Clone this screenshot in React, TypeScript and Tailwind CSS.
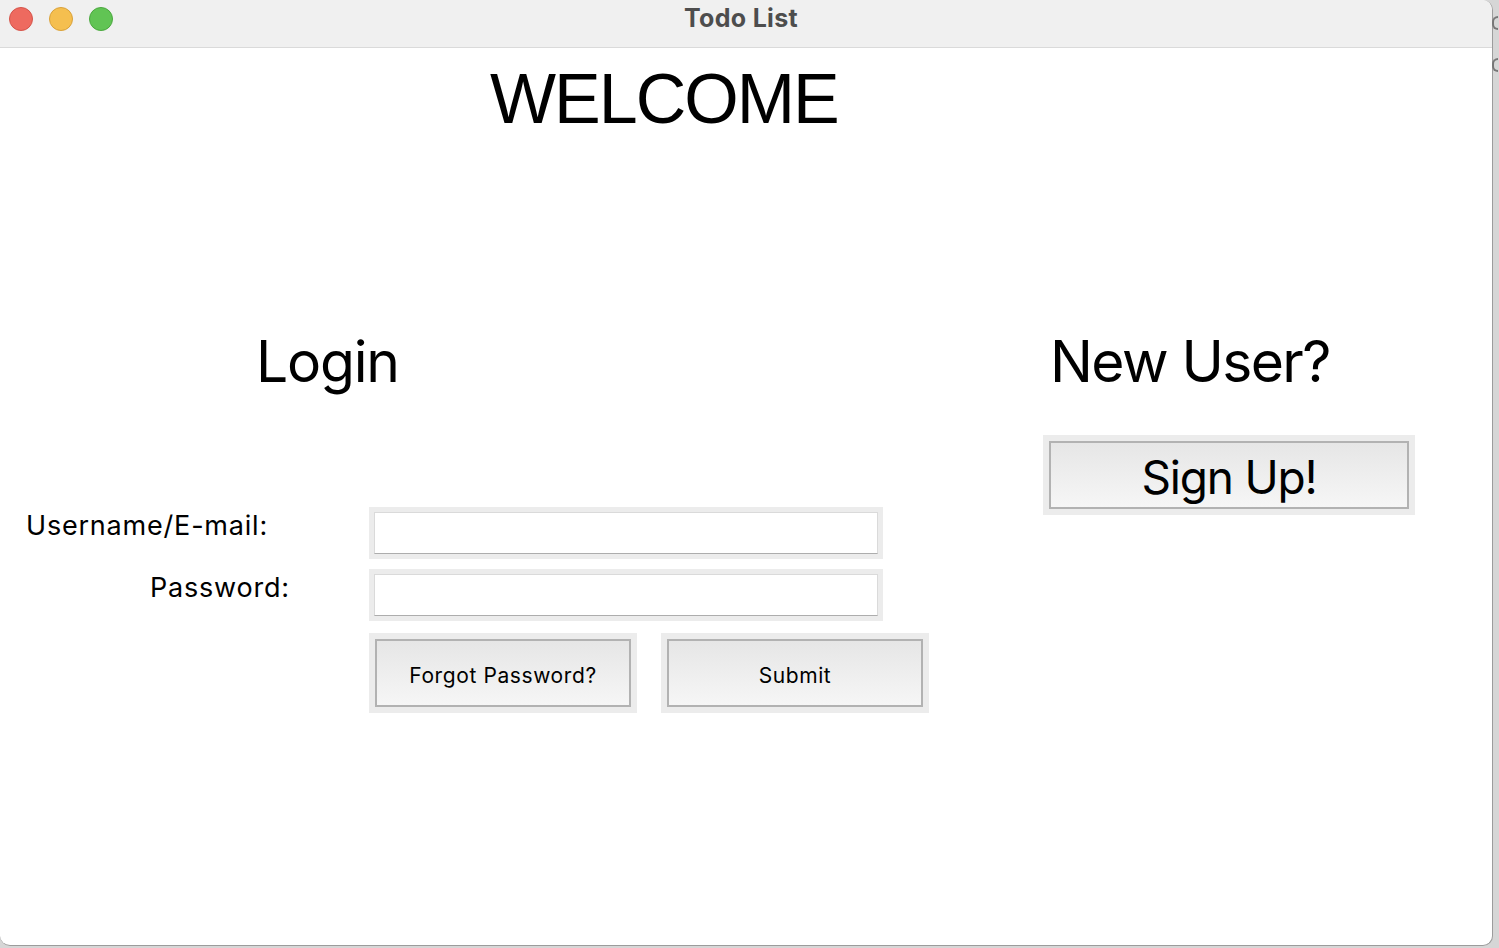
import React from "react";

const Frame = ({ children }: { children: React.ReactNode }) => (
    <div className="bg-[#ececec] p-[6px]">{children}</div>
);

const Entry = () => (
    <div className="bg-[#ececec] p-[5px]">
        <div className="h-[42px] w-[504px] bg-white border border-[#dadada] border-b-[#adadad]" />
    </div>
);

const App = () => {
    return (
        <div className="flex h-[948px] w-[1499px] bg-[#d6d6d6] font-['Inter',sans-serif] text-black overflow-hidden">
            <div className="flex flex-col w-[1493px] h-[946px] bg-white rounded-tr-[10px] rounded-b-[10px] border-r border-b border-[#9c9c9c] overflow-hidden">
                {/* Title bar */}
                <div className="grid grid-cols-[1fr_auto_1fr] items-start h-[48px] bg-[#f0f0f0] border-b border-[#dadada]">
                    <div className="flex gap-[16px] pl-[9px] pt-[7px]">
                        <span className="w-[24px] h-[24px] rounded-full bg-[#ee6a5f] border border-[#d5544a]" />
                        <span className="w-[24px] h-[24px] rounded-full bg-[#f5bf4f] border border-[#d9a13a]" />
                        <span className="w-[24px] h-[24px] rounded-full bg-[#61c454] border border-[#4ba83f]" />
                    </div>
                    <div className="pt-[6px] text-[25px] font-bold text-[#4d4d4d] leading-none tracking-[0.3px] -translate-x-[5px]">Todo List</div>
                    <div />
                </div>

                {/* Welcome */}
                <div className="pl-[490px] pt-[16px]">
                    <h1 className="font-['Liberation_Sans',sans-serif] text-[70px] leading-none tracking-[-2px]">WELCOME</h1>
                </div>

                <div className="flex mt-[199px]">
                    {/* Login column */}
                    <div className="flex flex-col w-[1043px]">
                        <h2 className="pl-[256px] text-[57px] leading-none tracking-[-1.2px]">Login</h2>
                        <div className="flex flex-col mt-[117px]">
                            <div className="flex">
                                <div className="w-[369px] pl-[26px] pt-[5px] text-[27px] leading-none tracking-[0.8px]">Username/E-mail:</div>
                                <Entry />
                            </div>
                            <div className="flex mt-[10px]">
                                <div className="w-[369px] pl-[150px] pt-[5px] text-[27px] leading-none tracking-[0.8px]">Password:</div>
                                <Entry />
                            </div>
                            <div className="flex mt-[12px] pl-[369px] gap-[24px]">
                                <Frame>
                                    <button className="flex items-center justify-center w-[256px] h-[68px] pt-[5px] border-2 border-[#b2b2b2] bg-linear-to-b from-[#e6e6e6] to-[#f6f6f6] text-[21px] tracking-[0.6px]">
                                        Forgot Password?
                                    </button>
                                </Frame>
                                <Frame>
                                    <button className="flex items-center justify-center w-[256px] h-[68px] pt-[5px] border-2 border-[#b2b2b2] bg-linear-to-b from-[#e6e6e6] to-[#f6f6f6] text-[21px] tracking-[0.6px]">
                                        Submit
                                    </button>
                                </Frame>
                            </div>
                        </div>
                    </div>

                    {/* New user column */}
                    <div className="flex flex-col">
                        <h2 className="pl-[7px] text-[57px] leading-none tracking-[-1.6px]">New User?</h2>
                        <div className="mt-[45px] self-start">
                            <Frame>
                                <button className="flex items-center justify-center w-[360px] h-[68px] pt-[5px] border-2 border-[#b2b2b2] bg-linear-to-b from-[#e6e6e6] to-[#f6f6f6] text-[46px] tracking-[-1.2px]">
                                    Sign Up!
                                </button>
                            </Frame>
                        </div>
                    </div>
                </div>
            </div>
            <div className="flex flex-col gap-[28px] pt-[16px] -ml-[1px]">
                <span className="w-[6px] h-[14px] border-2 border-r-0 border-[#777] rounded-l-full" />
                <span className="w-[6px] h-[14px] border-2 border-r-0 border-[#777] rounded-l-full" />
            </div>
        </div>
    );
};

export default App;
